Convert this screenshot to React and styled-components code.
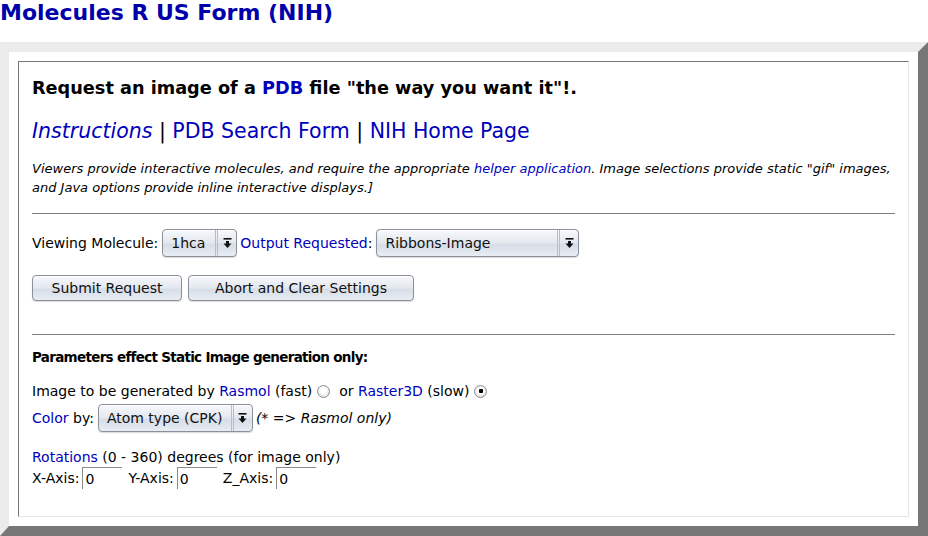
import styled, { createGlobalStyle } from 'styled-components'

const Global = createGlobalStyle`
body{
  margin:0;
  background:#fff;
  font-family:"DejaVu Sans", Verdana, sans-serif;
  font-size:14px;
  color:#000;
}
`

const Title = styled.h1`
margin:0;
height:42px;
font-size:22px;
line-height:26px;
font-weight:bold;
color:#0000aa;
`

const Frame = styled.div`
border-style:solid;
border-width:10px 10px 10px 9px;
border-color:#ececec #777 #777 #ececec;
padding:9px;
background:#fff;
`

const Cell = styled.div`
border:1px solid;
border-color:#777 #e6e6e6 #e6e6e6 #777;
padding:15px 13px 27px 13px;
display:flex;
flex-direction:column;
`

const Link = styled.a`
color:#0000bb;
text-decoration:none;
font-style:${p => (p.$italic ? 'italic' : 'inherit')};
`

const Heading = styled.div`
font-size:17.7px;
line-height:22px;
font-weight:bold;
`

const Nav = styled.div`
margin-top:20px;
font-size:20.5px;
line-height:24px;
`

const Note = styled.div`
margin-top:16px;
font-size:13px;
font-style:italic;
line-height:19px;
`

const Rule = styled.div`
height:0;
border-top:1px solid #808080;
margin:${p => p.$gap || '16px 0 15px'};
`

const Row = styled.div`
display:flex;
align-items:center;
gap:${p => p.$gap || '0px'};
margin-top:${p => p.$top || '0px'};
line-height:18px;
`

const Popup = styled.span`
display:inline-flex;
align-items:stretch;
box-sizing:border-box;
height:28px;
margin:0 3px 0 4px;
border:1px solid #8b9099;
border-radius:4px;
box-shadow:inset 0 1px 0 #fff, 0 1px 1px rgba(0,0,0,.15);
background:linear-gradient(#f6f8fb, #e3e8ef 50%, #d6dde7 55%, #e8edf3);
color:#111;
`

const PopupText = styled.span`
display:flex;
align-items:center;
width:${p => p.$w};
padding:0 8px;
font-size:14px;
`

const PopupArrow = styled.span`
display:flex;
align-items:center;
justify-content:center;
width:18px;
border-left:3px double #b8bdc6;
`

const Button = styled.button`
box-sizing:border-box;
height:26px;
width:${p => p.$w};
padding:0;
border:1px solid #8b9099;
border-radius:4px;
box-shadow:inset 0 1px 0 #fff, 0 1px 1px rgba(0,0,0,.15);
background:linear-gradient(#f6f8fb, #e3e8ef 50%, #d6dde7 55%, #e8edf3);
font-family:inherit;
font-size:14px;
color:#111;
`

const Bold = styled.div`
font-size:13.5px;
font-weight:bold;
letter-spacing:-0.7px;
line-height:18px;
`

const Radio = styled.span`
display:inline-flex;
align-items:center;
justify-content:center;
width:11px;
height:11px;
margin:0 ${p => p.$right || '0px'} 0 5px;
border:1px solid #8d8d8d;
border-radius:50%;
background:radial-gradient(circle at 50% 40%, #fff 30%, #d4d4d4 100%);
&::after{
  content:'';
  display:${p => (p.$on ? 'block' : 'none')};
  width:4px;
  height:4px;
  background:#000;
  border-radius:1px;
}
`

const Hint = styled.span`
font-style:italic;
`

const Field = styled.input`
box-sizing:border-box;
width:40px;
height:22px;
margin:0 6px 0 3px;
padding:0 2px;
border:none;
border-top:1px solid #8a8a8a;
border-left:1px solid #8a8a8a;
font-family:inherit;
font-size:14px;
outline:none;
`

function Arrow() {
  return (
    <svg width="9" height="10" viewBox="0 0 9 10">
      <rect x="0.5" y="0" width="8" height="1.6" fill="#111" />
      <path d="M3 3h3v2.6h2.5L4.5 10 0.5 5.6H3z" fill="#111" />
    </svg>
  )
}

function Select({ label, w }) {
  return (
    <Popup>
      <PopupText $w={w}>{label}</PopupText>
      <PopupArrow><Arrow /></PopupArrow>
    </Popup>
  )
}

export default function App() {
  return (
    <>
      <Global />
      <Title>Molecules R US Form (NIH)</Title>
      <Frame>
        <Cell>
          <Heading>Request an image of a <Link href="#">PDB</Link> file "the way you want it"!.</Heading>
          <Nav>
            <Link href="#" $italic>Instructions</Link> | <Link href="#">PDB Search Form</Link> | <Link href="#">NIH Home Page</Link>
          </Nav>
          <Note>
            Viewers provide interactive molecules, and require the appropriate <Link href="#">helper application</Link>. Image selections provide static "gif" images, and Java options provide inline interactive displays.]
          </Note>
          <Rule />
          <Row>
            Viewing Molecule:
            <Select label="1hca" w="36px" />
            <Link href="#">Output Requested</Link>:
            <Select label="Ribbons-Image" w="164px" />
          </Row>
          <Row $gap="6px" $top="18px">
            <Button $w="150px">Submit Request</Button>
            <Button $w="226px">Abort and Clear Settings</Button>
          </Row>
          <Rule $gap="33px 0 13px" />
          <Bold>Parameters effect Static Image generation only:</Bold>
          <Row $top="16px">
            Image to be generated by&nbsp;<Link href="#">Rasmol</Link>&nbsp;(fast)
            <Radio $right="9px" />
            or&nbsp;<Link href="#">Raster3D</Link>&nbsp;(slow)
            <Radio $on />
          </Row>
          <Row $top="4px">
            <Link href="#">Color</Link>&nbsp;by:
            <Select label="Atom type (CPK)" w="116px" />
            <Hint>(* =&gt; Rasmol only)</Hint>
          </Row>
          <Row $top="16px">
            <span><Link href="#">Rotations</Link> (0 - 360) degrees (for image only)</span>
          </Row>
          <Row $top="1px">
            X-Axis: <Field defaultValue="0" />
            Y-Axis: <Field defaultValue="0" />
            Z_Axis: <Field defaultValue="0" />
          </Row>
        </Cell>
      </Frame>
    </>
  )
}
